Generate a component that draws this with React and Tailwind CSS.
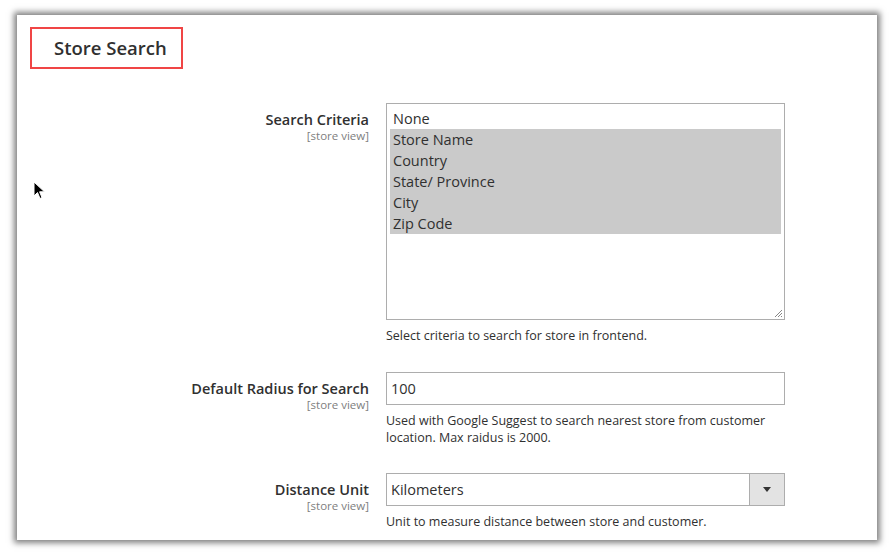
import React from 'react';

const font = { fontFamily: '"Open Sans", "Liberation Sans", sans-serif' };

function Label({ title }) {
  return (
    <div className="w-[352px] shrink-0 pt-[7px] text-right">
      <div className="text-[14.5px] font-semibold leading-[20px] text-[#303030]">{title}</div>
      <div className="text-[11.5px] leading-[12px] text-[#808080]">[store view]</div>
    </div>
  );
}

function Cursor() {
  return (
    <svg className="absolute left-[16px] top-[166px]" width="14" height="20" viewBox="0 0 14 20">
      <path d="M1 1 L1 15 L4.5 11.5 L7 17.5 L9 16.6 L6.6 10.8 L11.5 10.8 Z" fill="#000" stroke="#fff" strokeWidth="1" />
    </svg>
  );
}

export default function App() {
  const options = ['None', 'Store Name', 'Country', 'State/ Province', 'City', 'Zip Code'];
  return (
    <div className="h-[555px] w-[895px] overflow-hidden bg-white pl-[17px] pt-[15px]" style={font}>
      <div className="relative h-[525px] w-[860px] bg-white shadow-[0_0_6px_3px_rgba(0,0,0,0.5)]">
        <Cursor />
        <div className="ml-[13px] pt-[12px]">
          <div className="flex h-[42px] w-[153px] items-center border-2 border-[#f04545] pl-[22px] text-[18.5px] font-semibold text-[#303030]">
            Store Search
          </div>
        </div>

        <div className="mt-[34px] flex flex-col">
          <div className="flex gap-[17px]">
            <Label title="Search Criteria" />
            <div className="w-[399px]">
              <div className="relative h-[217px] border border-[#adadad] px-[3px] pt-[4px] text-[14.5px] leading-[21px] text-[#303030]">
                {options.map((o, i) => (
                  <div key={o} className={`pl-[3px] ${i > 0 ? 'bg-[#cacaca]' : ''}`}>{o}</div>
                ))}
                <svg className="absolute bottom-[1px] right-[1px]" width="9" height="9" viewBox="0 0 9 9">
                  <path d="M1 8 L8 1 M4 8 L8 4 M7 8 L8 7" stroke="#888" strokeWidth="1" />
                </svg>
              </div>
              <div className="mt-[7px] text-[12.5px] leading-[17px] text-[#303030]">
                Select criteria to search for store in frontend.
              </div>
            </div>
          </div>

          <div className="mt-[28px] flex gap-[17px]">
            <Label title="Default Radius for Search" />
            <div className="w-[399px]">
              <div className="flex h-[33px] items-center border border-[#adadad] pl-[4px] text-[14.5px] text-[#303030]">100</div>
              <div className="mt-[7px] text-[12.5px] leading-[17px] text-[#303030]">
                Used with Google Suggest to search nearest store from customer location. Max raidus is 2000.
              </div>
            </div>
          </div>

          <div className="mt-[27px] flex gap-[17px]">
            <Label title="Distance Unit" />
            <div className="w-[399px]">
              <div className="flex h-[33px] items-stretch border border-[#adadad] text-[14.5px] text-[#303030]">
                <div className="flex flex-1 items-center pl-[4px]">Kilometers</div>
                <div className="flex w-[35px] items-center justify-center border-l border-[#adadad] bg-[#e3e3e3]">
                  <svg width="8" height="5" viewBox="0 0 8 5">
                    <path d="M0 0 L8 0 L4 5 Z" fill="#333" />
                  </svg>
                </div>
              </div>
              <div className="mt-[7px] text-[12.5px] leading-[17px] text-[#303030]">
                Unit to measure distance between store and customer.
              </div>
            </div>
          </div>
        </div>
      </div>
    </div>
  );
}
